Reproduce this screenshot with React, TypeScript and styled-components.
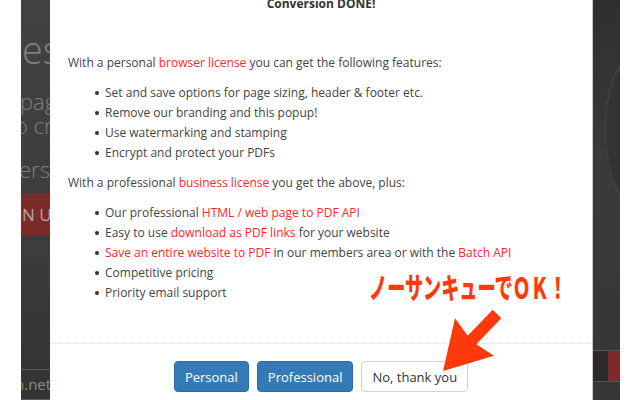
import React from "react";
import styled, { createGlobalStyle } from "styled-components";

const GlobalStyle = createGlobalStyle`
  html, body {
    margin: 0;
    padding: 0;
    background: #fff;
    overflow: hidden;
  }
  * { box-sizing: border-box; }
`;

const Page = styled.div`
  position: relative;
  width: 640px;
  height: 400px;
  padding: 0 20px 0 21px;
  display: flex;
  font-family: "Open Sans", "Noto Sans", sans-serif;
`;

const Backdrop = styled.div`
  flex: 1;
  display: grid;
  grid-template-columns: 29px 1fr 27px;
  background: #3b3b3b;
  overflow: hidden;
`;

const LeftPeek = styled.div`
  display: flex;
  flex-direction: column;
  overflow: hidden;
  background: linear-gradient(180deg, #424242 0%, #3c3c3c 60%, #333 100%);
  color: #7f7f7f;
  white-space: nowrap;
`;

const PeekText = styled.div<{ size: number; top: number; indent?: number }>`
  font-size: ${(p) => p.size}px;
  line-height: ${(p) => p.size}px;
  margin-top: ${(p) => p.top}px;
  margin-left: ${(p) => p.indent ?? 0}px;
  font-weight: 300;
`;

const RedBand = styled.div`
  margin-top: 14px;
  height: 42px;
  background: #7d2a2a;
  color: #b9a3a3;
  font-size: 17px;
  line-height: 42px;
  padding-left: 1px;
`;

const Ruled = styled.div`
  margin-top: 133px;
  height: 31px;
  border-top: 1px solid #5a5a5a;
  border-bottom: 1px solid #5a5a5a;
  font-size: 15px;
  line-height: 28px;
  color: #8a8a8a;
  margin-left: -6px;
`;

const RightPeek = styled.div`
  display: flex;
  flex-direction: column;
  background:
    radial-gradient(ellipse 40px 110px at 38px 130px, #333 60%, #3f3f3f 64%, transparent 67%),
    linear-gradient(180deg, #2f2f2f 0%, #3a3a3a 40%, #363636 100%);
`;

const RightFoot = styled.div`
  margin-top: 350px;
  height: 32px;
  border-top: 1px solid #555;
  border-bottom: 1px solid #555;
  display: flex;
  justify-content: flex-end;
  background: #2a2a2a;
`;

const RightRed = styled.div`
  width: 12px;
  background: #7a2a2a;
`;

const Modal = styled.div`
  background: #fff;
  border-right: 1px solid #c9c9c9;
  display: flex;
  flex-direction: column;
  height: 400px;
  overflow: hidden;
`;

const Title = styled.div`
  margin-top: -4px;
  text-align: center;
  font-weight: 700;
  font-size: 12px;
  line-height: 16px;
  color: #333;
`;

const Body = styled.div`
  flex: 1;
  padding: 41px 0 0 18px;
  font-size: 12px;
  line-height: 20px;
  color: #444;
`;

const Para = styled.p`
  margin: 0;
`;

const Red = styled.span`
  color: #f42a2a;
`;

const List = styled.ul`
  list-style: none;
  margin: 10px 0;
  padding: 0 0 0 27px;
`;

const Item = styled.li`
  display: flex;
  align-items: center;
  white-space: nowrap;
  &::before {
    content: "";
    width: 4px;
    height: 4px;
    border-radius: 50%;
    background: #333;
    margin-right: 6px;
    flex: none;
  }
`;

const Footer = styled.div`
  height: 57px;
  border-top: 1px dotted #dcdcdc;
  display: flex;
  justify-content: center;
  gap: 8px;
  padding-top: 17px;
`;

const Button = styled.button<{ primary?: boolean }>`
  height: 31px;
  padding: 0 10px;
  border-radius: 4px;
  font-family: "Open Sans", "Noto Sans", sans-serif;
  font-size: 13px;
  border: 1px solid ${(p) => (p.primary ? "#2e6da4" : "#d0d0d0")};
  background: ${(p) => (p.primary ? "#337ab7" : "#fff")};
  color: ${(p) => (p.primary ? "#fff" : "#333")};
`;

const Note = styled.div`
  position: absolute;
  left: 369px;
  top: 266px;
  font-family: "Noto Sans CJK JP", sans-serif;
  font-weight: 900;
  font-size: 29px;
  line-height: 40px;
  color: #ff3a0a;
  white-space: nowrap;
  transform: scaleX(0.625);
  transform-origin: left center;
`;

const Arrow = styled.svg`
  position: absolute;
  left: 0;
  top: 0;
  pointer-events: none;
`;

export default function App() {
  return (
    <>
      <GlobalStyle />
      <Page>
        <Backdrop>
          <LeftPeek>
            <PeekText size={38} top={30} indent={1}>es</PeekText>
            <PeekText size={22} top={22} indent={-1}>page</PeekText>
            <PeekText size={22} top={2} indent={-6}>o cre</PeekText>
            <PeekText size={22} top={22} indent={-2}>ers n</PeekText>
            <RedBand>N U</RedBand>
            <Ruled>n.net</Ruled>
          </LeftPeek>
          <Modal>
            <Title>Conversion DONE!</Title>
            <Body>
              <Para>
                With a personal <Red>browser license</Red> you can get the following features:
              </Para>
              <List>
                <Item>Set and save options for page sizing, header &amp; footer etc.</Item>
                <Item>Remove our branding and this popup!</Item>
                <Item>Use watermarking and stamping</Item>
                <Item>Encrypt and protect your PDFs</Item>
              </List>
              <Para>
                With a professional <Red>business license</Red> you get the above, plus:
              </Para>
              <List>
                <Item>
                  Our professional&nbsp;<Red>HTML / web page to PDF API</Red>
                </Item>
                <Item>
                  Easy to use&nbsp;<Red>download as PDF links</Red>&nbsp;for your website
                </Item>
                <Item>
                  <Red>Save an entire website to PDF</Red>&nbsp;in our members area or with the&nbsp;
                  <Red>Batch API</Red>
                </Item>
                <Item>Competitive pricing</Item>
                <Item>Priority email support</Item>
              </List>
            </Body>
            <Footer>
              <Button primary>Personal</Button>
              <Button primary>Professional</Button>
              <Button>No, thank you</Button>
            </Footer>
          </Modal>
          <RightPeek>
            <RightFoot>
              <RightRed />
            </RightFoot>
          </RightPeek>
        </Backdrop>
        <Note>ノーサンキューでＯＫ！</Note>
        <Arrow width={640} height={400} viewBox="0 0 640 400">
          <polygon
            points="492.7,309.8 467.7,335.8 455,318.3 443,371 494,355.7 476.3,344.2 501.3,318.2"
            fill="#ff3a0a"
          />
        </Arrow>
      </Page>
    </>
  );
}
